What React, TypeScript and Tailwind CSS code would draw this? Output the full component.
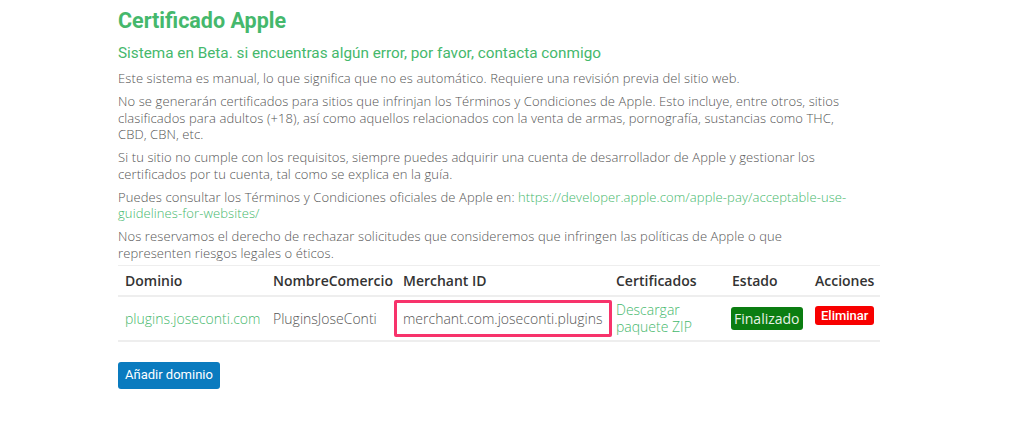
import React from 'react';

const body = { fontFamily: "'Open Sans', 'Liberation Sans', sans-serif" };
const rob = { fontFamily: "Roboto, 'Liberation Sans', sans-serif" };

export default function App() {
  return (
    <div className="w-[1024px] h-[424px] bg-white overflow-hidden">
      <div className="ml-[118px] w-[762px] pt-[7px]">
        <h1 className="text-[21.5px] leading-[28px] font-bold text-[#45b86c]" style={rob}>
          Certificado Apple
        </h1>
        <h2 className="mt-[8px] text-[15.3px] leading-[20px] font-normal text-[#45b86c]" style={rob}>
          Sistema en Beta. si encuentras algún error, por favor, contacta conmigo
        </h2>
        <div className="mt-[7px] text-[13px] leading-[16.5px] font-light tracking-[0.1px] text-[#555]" style={body}>
          <p className="mb-[6.5px]">
            Este sistema es manual, lo que significa que no es automático. Requiere una revisión previa del sitio web.
          </p>
          <p className="mb-[6.5px]">
            No se generarán certificados para sitios que infrinjan los Términos y Condiciones de Apple. Esto incluye, entre otros, sitios
            <br />
            clasificados para adultos (+18), así como aquellos relacionados con la venta de armas, pornografía, sustancias como THC,
            <br />
            CBD, CBN, etc.
          </p>
          <p className="mb-[6.5px]">
            Si tu sitio no cumple con los requisitos, siempre puedes adquirir una cuenta de desarrollador de Apple y gestionar los
            <br />
            certificados por tu cuenta, tal como se explica en la guía.
          </p>
          <p className="mb-[6.5px]">
            Puedes consultar los Términos y Condiciones oficiales de Apple en:{' '}
            <a className="text-[#45b86c]">
              https://developer.apple.com/apple-pay/acceptable-use-
              <br />
              guidelines-for-websites/
            </a>
          </p>
          <p>
            Nos reservamos el derecho de rechazar solicitudes que consideremos que infringen las políticas de Apple o que
            <br />
            representen riesgos legales o éticos.
          </p>
        </div>

        <table className="mt-[4px] w-full table-fixed text-[14px] border-collapse" style={body}>
          <colgroup>
            <col className="w-[148px]" />
            <col className="w-[130px]" />
            <col className="w-[213px]" />
            <col className="w-[116px]" />
            <col className="w-[83px]" />
            <col />
          </colgroup>
          <thead>
            <tr className="border-t border-b-2 border-[#eee] text-left text-[#333] h-[30px]">
              <th className="font-semibold px-[7px] whitespace-nowrap">Dominio</th>
              <th className="font-semibold px-[7px] whitespace-nowrap">NombreComercio</th>
              <th className="font-semibold px-[7px] whitespace-nowrap">Merchant ID</th>
              <th className="font-semibold px-[7px] whitespace-nowrap">Certificados</th>
              <th className="font-semibold px-[7px] whitespace-nowrap">Estado</th>
              <th className="font-semibold px-[7px] whitespace-nowrap">Acciones</th>
            </tr>
          </thead>
          <tbody>
            <tr className="border-b-2 border-[#eee] font-light text-[#555] h-[45px]">
              <td className="px-[7px] text-[#45b86c] whitespace-nowrap">plugins.joseconti.com</td>
              <td className="px-[7px] whitespace-nowrap">PluginsJoseConti</td>
              <td className="p-0">
                <div className="ml-[-2px] w-[218px] border-[3px] border-[#f7336b] rounded-[2px] px-[6px] h-[37px] flex items-center whitespace-nowrap">
                  merchant.com.joseconti.plugins
                </div>
              </td>
              <td className="px-[7px] text-[#45b86c] leading-[17px]">
                Descargar<br />paquete ZIP
              </td>
              <td className="px-[6px]">
                <span className="inline-block bg-[#0b7d11] text-[#e6f2e6] rounded-[3px] px-[3px] h-[23px] leading-[23px] font-normal">Finalizado</span>
              </td>
              <td className="px-[7px] align-top pt-[7px]">
                <span className="inline-block bg-[#f80000] text-white rounded-[3px] px-[6px] h-[19px] leading-[19px] text-[13px] font-medium" style={rob}>Eliminar</span>
              </td>
            </tr>
          </tbody>
        </table>

        <button className="block mt-[20px] bg-[#0a7bbf] text-white text-[13px] rounded-[3px] px-[7px] h-[27px]" style={rob}>
          Añadir dominio
        </button>
      </div>
    </div>
  );
}
